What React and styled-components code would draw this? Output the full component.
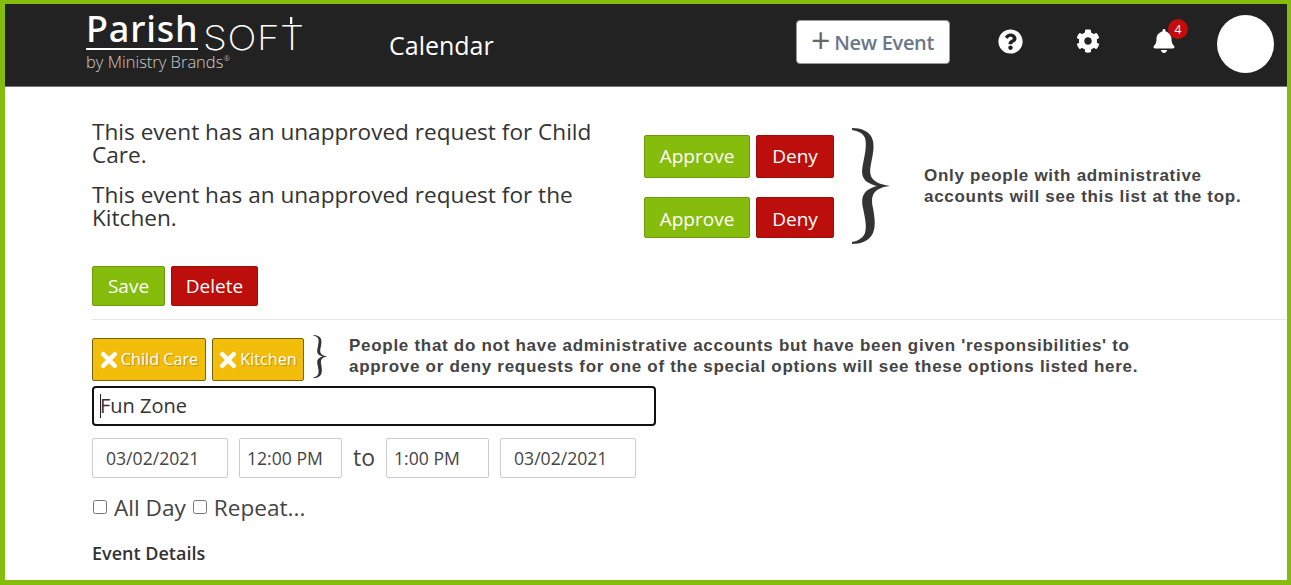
import React from 'react';
import styled, { createGlobalStyle } from 'styled-components';
import { FaBell, FaCog, FaQuestionCircle, FaTimes } from 'react-icons/fa';

const GlobalStyle = createGlobalStyle`
html, body {
  margin: 0;
  padding: 0;
  background: #fff;
}
* {
  box-sizing: border-box;
}
`;

const Frame = styled.div`
font-family: "Open Sans", sans-serif;
border-style: solid;
border-color: #86bc0b;
border-width: 4px 4px 5px 5px;
background: #fff;
color: #333;
overflow: hidden;
height: 585px;
width: 1291px;
`;

const Header = styled.header`
border-bottom: 1px solid #777;
background: #222;
align-items: center;
display: flex;
height: 83px;
`;

const Logo = styled.div`
flex-direction: column;
margin: -6px 0 0 81px;
display: flex;
color: #fff;
width: 215px;
`;

const LogoMark = styled.div`
align-items: flex-end;
display: flex;
height: 36px;
`;

const LogoParish = styled.span`
border-bottom: 2px solid #fff;
font-family: "Noto Sans", sans-serif;
letter-spacing: .8px;
line-height: 30px;
font-size: 36px;
font-weight: 500;
height: 36px;
`;

const LogoSoft = styled.span`
font-family: Inter, sans-serif;
transform: scaleX(1.13);
transform-origin: left;
margin: 0 0 -5px 5px;
letter-spacing: .5px;
line-height: 34px;
font-weight: 200;
font-size: 34px;
position: relative;
&::after {
  content: '';
  background: #fff;
  position: absolute;
  height: 7px;
  width: 2px;
  right: 11px;
  top: -4px;
}
`;

const LogoBy = styled.span`
font-family: "Open Sans", sans-serif;
font-weight: 300;
margin-top: 3px;
font-size: 16.5px;
line-height: 18px;
color: #ccc;
white-space: nowrap;
`;

const LogoReg = styled.sup`
vertical-align: top;
line-height: 10px;
font-size: 8px;
`;

const Title = styled.div`
margin-left: 88px;
font-size: 25px;
color: #fff;
`;

const NewEvent = styled.button`
font-family: "Open Sans", sans-serif;
border: 1px solid #999;
border-radius: 4px;
background: #fff;
color: #6b7788;
margin: 0 0 6px auto;
align-items: center;
display: flex;
font-size: 20px;
font-weight: 600;
letter-spacing: -.3px;
padding: 0 14px;
height: 44px;
width: 154px;
white-space: nowrap;
`;

const Plus = styled.span`
color: #666;
font-size: 34px;
font-weight: 500;
line-height: 1;
margin: -5px 4px 0 0;
`;

const IconSlot = styled.div`
justify-content: center;
align-items: center;
position: relative;
margin: 0 0 8px ${props => props.gap}px;
font-size: ${props => props.size}px;
display: flex;
color: #fff;
width: 26px;
height: 26px;
`;

const Badge = styled.span`
font-family: "Open Sans", sans-serif;
justify-content: center;
align-items: center;
background: #c50c0c;
border-radius: 50%;
position: absolute;
display: flex;
font-size: 12px;
color: #fff;
height: 20px;
width: 20px;
right: -11px;
top: -9px;
`;

const Avatar = styled.div`
border-radius: 50%;
background: #fff;
margin: 0 13px 2px 40px;
height: 58px;
width: 57px;
`;

const Main = styled.main`
padding: 0 0 0 87px;
`;

const Requests = styled.section`
grid-template-columns: 552px auto 90px auto;
justify-content: start;
padding-top: 34px;
align-items: start;
display: grid;
`;

const RequestText = styled.div`
flex-direction: column;
margin-top: -1px;
display: flex;
gap: 17px;
`;

const Message = styled.p`
font-size: 22.6px;
line-height: 23px;
margin: 0;
width: 510px;
`;

const RequestActions = styled.div`
flex-direction: column;
padding-top: 14px;
display: flex;
gap: 19px;
`;

const ActionRow = styled.div`
display: flex;
gap: 6px;
`;

const ActionButton = styled.button`
font-family: "Open Sans", sans-serif;
background: ${props => (props.$tone === 'green' ? '#86bc0b' : '#bc0e0b')};
border: 1px solid ${props => (props.$tone === 'green' ? '#6d990a' : '#a00c09')};
width: ${props => props.$width}px;
height: ${props => props.$height}px;
padding: ${props => props.$pad || '0'};
border-radius: 2px;
font-size: 19px;
color: #fff;
`;

const BraceIcon = styled.svg`
display: block;
fill: #333;
flex: none;
`;

const Brace = ({ width, height }) => (
  <BraceIcon width={width} height={height} viewBox="0 0 38 116">
    <path d="M0 0C9 0 17 3 20 10C23 17 21 26 19 36C17 46 17 55 38 58C19 60 19 70 21 80C23 91 24 100 20 107C16 113 9 116 0 116L0 114C6 113 11 110 13 105C15 98 13 90 11 80C9 70 10 62 25 58C9 54 9 46 11 36C13 26 15 17 13 10C11 5 6 3 0 2Z" />
  </BraceIcon>
);

const BraceSlot = styled.div`
padding: 6px 0 0 18px;
`;

const Note = styled.p`
font-family: "Liberation Sans", Arial, sans-serif;
letter-spacing: ${props => props.$spacing}px;
font-weight: bold;
line-height: 21px;
font-size: 17px;
color: #444;
margin: 0;
`;

const NoteTop = styled(Note)`
margin-top: 44px;
width: 330px;
`;

const SaveRow = styled.div`
margin-top: 21px;
display: flex;
gap: 6px;
`;

const Divider = styled.hr`
border: 0;
border-top: 1px solid #e8e8e8;
margin: 13px 0 0;
`;

const TagRow = styled.div`
align-items: flex-start;
margin-top: 18px;
display: flex;
gap: 6px;
`;

const Tag = styled.button`
font-family: "Open Sans", sans-serif;
text-shadow: 1px 1px 1px rgba(0, 0, 0, .25);
width: ${props => props.$width}px;
border: 1px solid #7a6306;
justify-content: center;
background: #f2bd0b;
align-items: center;
border-radius: 2px;
font-size: 16.2px;
display: flex;
color: #fff;
height: 43px;
padding: 0 0 2px;
gap: 3px;
`;

const TagClose = styled(FaTimes)`
margin: 2px -3px 0;
font-size: 24px;
flex: none;
`;

const TagBrace = styled.div`
margin: -3px 0 0 3px;
`;

const NoteInline = styled(Note)`
margin: -3px 0 0 15px;
white-space: nowrap;
`;

const NameField = styled.div`
position: relative;
margin-top: 5px;
height: 40px;
width: 564px;
`;

const NameInput = styled.input`
font-family: "Open Sans", sans-serif;
border: 2px solid #111;
border-radius: 4px;
padding: 0 6px 2px;
font-size: 20px;
font-weight: 500;
color: #333;
outline: 0;
height: 100%;
width: 100%;
`;

const Caret = styled.span`
position: absolute;
background: #222;
height: 24px;
width: 1px;
left: 8px;
top: 8px;
`;

const DateRow = styled.div`
align-items: center;
margin-top: 12px;
display: flex;
`;

const DateInput = styled.input`
font-family: "Open Sans", sans-serif;
margin-left: ${props => props.$gap || 0}px;
width: ${props => props.$width}px;
padding-left: ${props => props.$pad}px;
border: 1px solid #ccc;
border-radius: 2px;
font-size: 17.6px;
color: #444;
height: 40px;
`;

const To = styled.span`
font-size: 23px;
margin: -2px 0 0 11px;
color: #444;
`;

const CheckRow = styled.div`
align-items: center;
margin-top: 13px;
display: flex;
height: 32px;
`;

const Check = styled.input`
margin: 0 7px 0 1px;
height: 14px;
width: 14px;
`;

const CheckLabel = styled.label`
margin-right: 6px;
font-size: 22.6px;
color: #444;
`;

const DetailsLabel = styled.div`
margin-top: 18px;
font-size: 18px;
font-weight: 600;
line-height: 24px;
`;

const App = () => (
  <Frame>
    <GlobalStyle />
    {/* HEADER */}
    <Header>
      <Logo>
        <LogoMark>
          <LogoParish>Parish</LogoParish>
          <LogoSoft>SOFT</LogoSoft>
        </LogoMark>
        <LogoBy>by Ministry Brands<LogoReg>®</LogoReg></LogoBy>
      </Logo>
      <Title>Calendar</Title>
      <NewEvent><Plus>+</Plus>New Event</NewEvent>
      <IconSlot gap={47} size={25}><FaQuestionCircle /></IconSlot>
      <IconSlot gap={52} size={24}><FaCog /></IconSlot>
      <IconSlot gap={50} size={24}>
        <FaBell />
        <Badge>4</Badge>
      </IconSlot>
      <Avatar />
    </Header>
    <Main>
      {/* REQUESTS */}
      <Requests>
        <RequestText>
          <Message>This event has an unapproved request for Child Care.</Message>
          <Message>This event has an unapproved request for the Kitchen.</Message>
        </RequestText>
        <RequestActions>
          <ActionRow>
            <ActionButton $tone="green" $width={106} $height={43} $pad="0 0 2px">Approve</ActionButton>
            <ActionButton $tone="red" $width={78} $height={43} $pad="0 0 2px">Deny</ActionButton>
          </ActionRow>
          <ActionRow>
            <ActionButton $tone="green" $width={106} $height={41} $pad="2px 0 0">Approve</ActionButton>
            <ActionButton $tone="red" $width={78} $height={41} $pad="2px 0 0">Deny</ActionButton>
          </ActionRow>
        </RequestActions>
        <BraceSlot><Brace width={38} height={118} /></BraceSlot>
        <NoteTop $spacing={0.7}>Only people with administrative accounts will see this list at the top.</NoteTop>
      </Requests>
      <SaveRow>
        <ActionButton $tone="green" $width={73} $height={40}>Save</ActionButton>
        <ActionButton $tone="red" $width={87} $height={40}>Delete</ActionButton>
      </SaveRow>
      <Divider />
      {/* FORM */}
      <TagRow>
        <Tag $width={114}><TagClose />Child Care</Tag>
        <Tag $width={92}><TagClose />Kitchen</Tag>
        <TagBrace><Brace width={15} height={43} /></TagBrace>
        <NoteInline $spacing={0.71}>
          People that do not have administrative accounts but have been given 'responsibilities' to<br />
          approve or deny requests for one of the special options will see these options listed here.
        </NoteInline>
      </TagRow>
      <NameField>
        <NameInput readOnly value="Fun Zone" />
        <Caret />
      </NameField>
      <DateRow>
        <DateInput readOnly $width={136} $pad={13} value="03/02/2021" />
        <DateInput readOnly $gap={11} $width={103} $pad={7} value="12:00 PM" />
        <To>to</To>
        <DateInput readOnly $gap={11} $width={103} $pad={7} value="1:00 PM" />
        <DateInput readOnly $gap={11} $width={136} $pad={13} value="03/02/2021" />
      </DateRow>
      <CheckRow>
        <Check type="checkbox" id="allday" />
        <CheckLabel htmlFor="allday">All Day</CheckLabel>
        <Check type="checkbox" id="repeat" />
        <CheckLabel htmlFor="repeat">Repeat...</CheckLabel>
      </CheckRow>
      <DetailsLabel>Event Details</DetailsLabel>
    </Main>
  </Frame>
);

export default App;
